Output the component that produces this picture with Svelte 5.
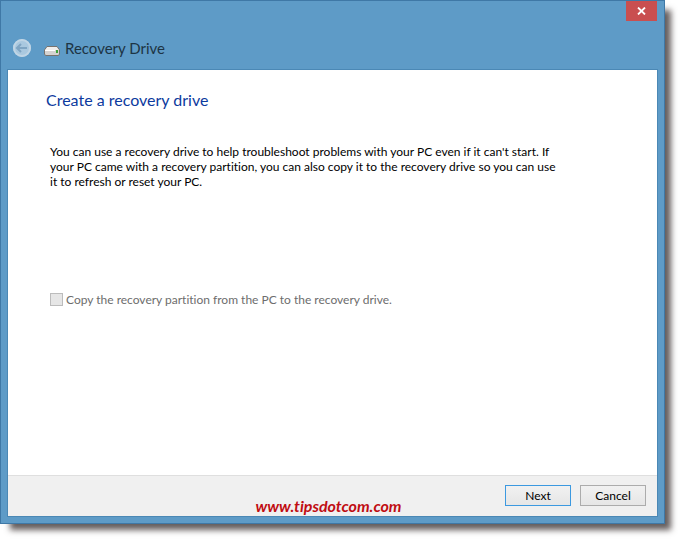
<script lang="ts">
  let copyPartition = $state(false);
</script>

<div class="desktop">
  <main class="window">
    <header>
      <button class="close" aria-label="Close">
        <svg width="9" height="8" viewBox="0 0 9 8">
          <path d="M1 0.5 L8 7.5 M8 0.5 L1 7.5" stroke="#fff" stroke-width="1.8" fill="none" />
        </svg>
      </button>
      <div class="heading">
        <button class="back" aria-label="Back" disabled>
          <svg width="20" height="20" viewBox="0 0 20 20">
            <circle cx="10" cy="10" r="9" fill="#a9c8df" />
            <circle cx="10" cy="10" r="8" fill="none" stroke="#c0d5e5" stroke-width="2" />
            <path
              d="M5 10 H15 M9 6 L5 10 L9 14"
              fill="none"
              stroke="#7fa5c3"
              stroke-width="2"
            />
          </svg>
        </button>
        <svg class="drive" width="16" height="10" viewBox="0 0 16 10">
          <path d="M3 0.5 H13 L15.5 4 V8 L14.5 9.5 H1.5 L0.5 8 V4 Z" fill="#d5d3d1" stroke="#77736f" />
          <path d="M3.3 1 H12.7 L14.8 4 H1.2 Z" fill="#f0eeec" />
          <path d="M1 4.5 H11" stroke="#fff" />
          <rect x="12" y="4" width="2" height="3" fill="#3ea33a" />
        </svg>
        <span class="title">Recovery Drive</span>
      </div>
    </header>

    <div class="panel">
      <section>
        <h1>Create a recovery drive</h1>
        <p>
          You can use a recovery drive to help troubleshoot problems with your PC even if it can't start. If<br />
          your PC came with a recovery partition, you can also copy it to the recovery drive so you can use<br />
          it to refresh or reset your PC.
        </p>
        <label>
          <input type="checkbox" bind:checked={copyPartition} disabled />
          Copy the recovery partition from the PC to the recovery drive.
        </label>
      </section>
      <footer>
        <span class="site">www.tipsdotcom.com</span>
        <div class="actions">
          <button class="action primary">Next</button>
          <button class="action">Cancel</button>
        </div>
      </footer>
    </div>
  </main>
</div>

<style>
  :global(body) {
    background: #fff;
  }
  .desktop {
    box-sizing: border-box;
    display: flex;
    min-height: 100vh;
    padding: 0 15px 15px 0;
    overflow: hidden;
    font-family: Lato, "Open Sans", sans-serif;
    font-size: 12px;
    font-variant-ligatures: none;
    line-height: 15px;
    color: #000;
  }
  .window {
    box-sizing: border-box;
    flex: 1;
    display: flex;
    flex-direction: column;
    padding: 0 7px 7px;
    border: 1px solid #3f78a6;
    background: #5e9bc7;
    box-shadow: 8px 8px 6px -2px rgba(50, 40, 40, 0.75);
  }
  header {
    display: flex;
    flex-direction: column;
  }
  button {
    font: inherit;
    font-variant-ligatures: inherit;
    color: inherit;
  }
  .close {
    align-self: flex-end;
    display: grid;
    place-items: center;
    width: 31px;
    height: 20px;
    padding: 0;
    border: 0;
    background: #c94f50;
  }
  .heading {
    display: flex;
    align-items: center;
    height: 24px;
    margin: 15px 0 10px 4px;
  }
  .back {
    display: flex;
    padding: 0;
    border: 0;
    background: none;
  }
  .drive {
    margin: 6px 5px 0 12px;
  }
  .title {
    font-size: 15px;
    line-height: 24px;
    color: #1d3444;
  }
  .panel {
    flex: 1;
    display: flex;
    flex-direction: column;
    outline: 1px solid #4b88b5;
    background: #fff;
  }
  section {
    flex: 1;
    padding: 19px 38px;
  }
  h1 {
    margin: 0;
    font-size: 16px;
    font-weight: 400;
    line-height: 22px;
    color: #0c3a9e;
  }
  p {
    margin: 33px 0 0 4px;
  }
  label {
    display: flex;
    align-items: center;
    gap: 3px;
    margin: 103px 0 0 4px;
    color: #6d6d6d;
  }
  input {
    appearance: none;
    flex: none;
    width: 13px;
    height: 13px;
    margin: 0;
    border: 1px solid #bcbcbc;
    background: #e6e6e6;
  }
  footer {
    display: grid;
    grid-template-columns: 1fr auto 1fr;
    border-top: 1px solid #dfdfdf;
    background: #f0f0f0;
  }
  .site {
    grid-column: 2;
    align-self: end;
    padding-right: 8px;
    font-size: 16px;
    font-style: italic;
    font-weight: 700;
    line-height: 20px;
    color: #c00d12;
  }
  .actions {
    display: flex;
    justify-content: flex-end;
    gap: 9px;
    padding: 9px 11px 10px 0;
  }
  .action {
    width: 66px;
    height: 21px;
    padding: 0;
    border: 1px solid #acacac;
    background: linear-gradient(#f1f1f1, #e6e6e6);
  }
  .primary {
    border-color: #3c99e0;
  }
</style>
